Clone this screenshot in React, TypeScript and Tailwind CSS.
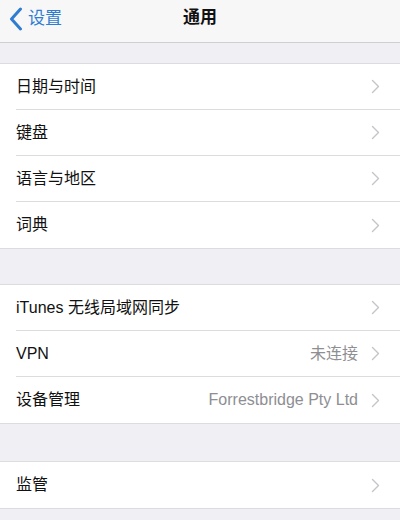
import React from "react";

type Row = { label: string; value?: string };

const groups: { gap: string; rows: Row[] }[] = [
  {
    gap: "h-[20px]",
    rows: [
      { label: "日期与时间" },
      { label: "键盘" },
      { label: "语言与地区" },
      { label: "词典" },
    ],
  },
  {
    gap: "h-[35px]",
    rows: [
      { label: "iTunes 无线局域网同步" },
      { label: "VPN", value: "未连接" },
      { label: "设备管理", value: "Forrestbridge Pty Ltd" },
    ],
  },
  {
    gap: "h-[37px]",
    rows: [{ label: "监管" }],
  },
];

const Chevron = () => (
  <svg width="9" height="15" viewBox="0 0 9 15" className="ml-[13px] shrink-0">
    <path d="M1.5 1.5 L7.5 7.5 L1.5 13.5" fill="none" stroke="#c4c4c9" strokeWidth="1.4" strokeLinecap="round" strokeLinejoin="round" />
  </svg>
);

const SettingsRow = ({ row, last }: { row: Row; last: boolean }) => (
  <div className="flex h-[46px] pl-[16px] bg-white">
    <div className={`flex flex-1 items-center pr-[20px] ${last ? "" : "border-b border-[#dcdce0]"}`}>
      <span className="flex-1 text-[16px] text-[#111]">{row.label}</span>
      {row.value && <span className="text-[16px] text-[#8e8e93]">{row.value}</span>}
      <Chevron />
    </div>
  </div>
);

export default function App() {
  return (
    <div
      className="w-[400px] h-[520px] overflow-hidden bg-[#efeff4]"
      style={{ fontFamily: '"Liberation Sans", "Noto Sans CJK SC", sans-serif' }}
    >
      {/* nav bar */}
      <div className="relative flex h-[43px] items-center justify-center pb-[6px] bg-[#f7f7f8] border-b border-[#cfcfd3]">
        <div className="absolute left-[9px] top-[6px] flex items-center text-[#2f7dd1]">
          <svg width="14" height="24" viewBox="0 0 14 24">
            <path d="M11.5 2 L2.5 12 L11.5 22" fill="none" stroke="currentColor" strokeWidth="3" strokeLinecap="round" strokeLinejoin="round" />
          </svg>
          <span className="ml-[5px] text-[17px]">设置</span>
        </div>
        <span className="text-[17px] font-bold text-[#111]">通用</span>
      </div>

      {groups.map((g, gi) => (
        <div key={gi}>
          <div className={g.gap} />
          <div className="border-y border-[#dcdce0]">
            {g.rows.map((r, i) => (
              <SettingsRow key={r.label} row={r} last={i === g.rows.length - 1} />
            ))}
          </div>
        </div>
      ))}
    </div>
  );
}
